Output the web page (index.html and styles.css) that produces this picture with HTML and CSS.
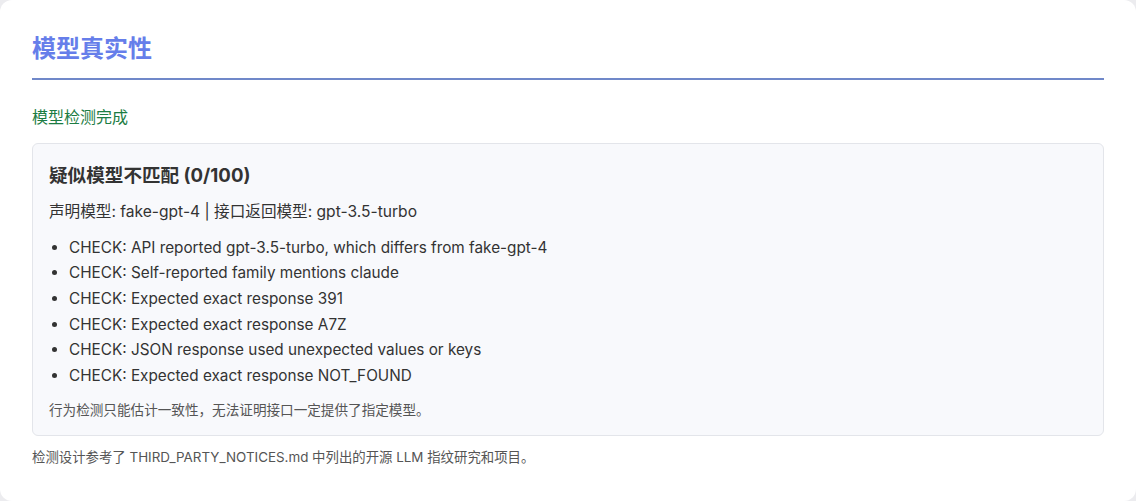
FILE: index.html
```html
<!DOCTYPE html>
<html lang="zh-CN">
<head>
  <meta charset="UTF-8">
  <title>模型真实性</title>
  <link rel="stylesheet" href="styles.css">
</head>
<body>
  <div class="panel">
    <h2 class="panel-title">模型真实性</h2>
    <p class="status ok">模型检测完成</p>
    <div class="result">
      <h3>疑似模型不匹配 (0/100)</h3>
      <p class="meta">声明模型: fake-gpt-4 | 接口返回模型: gpt-3.5-turbo</p>
      <ul class="checks">
        <li>CHECK: API reported gpt-3.5-turbo, which differs from fake-gpt-4</li>
        <li>CHECK: Self-reported family mentions claude</li>
        <li>CHECK: Expected exact response 391</li>
        <li>CHECK: Expected exact response A7Z</li>
        <li>CHECK: JSON response used unexpected values or keys</li>
        <li>CHECK: Expected exact response NOT_FOUND</li>
      </ul>
      <p class="note">行为检测只能估计一致性，无法证明接口一定提供了指定模型。</p>
    </div>
    <p class="footnote">检测设计参考了 THIRD_PARTY_NOTICES.md 中列出的开源 LLM 指纹研究和项目。</p>
  </div>
</body>
</html>
```

FILE: styles.css
```css
body {
  margin: 0;
  background: #ececef;
  font-family: Inter, "Noto Sans CJK SC", sans-serif;
  color: #333;
}
.panel {
  background: #fff;
  border-radius: 12px;
  height: 100vh;
  box-sizing: border-box;
  padding: 32px;
}
.panel-title {
  margin: 0;
  font-size: 24px;
  line-height: 1.4;
  font-weight: 700;
  color: #667eea;
  padding-bottom: 12px;
  border-bottom: 2px solid #7088c9;
}
.status {
  margin: 25px 0 13px;
  font-size: 16px;
  line-height: 25.6px;
}
.status.ok {
  color: #1c7c43;
}
.result {
  background: #f8f9fc;
  border: 1px solid #e3e5ea;
  border-radius: 6px;
  padding: 18px 16px 15px;
}
.result h3 {
  margin: 0 0 10px;
  font-size: 18.6px;
  line-height: 27px;
  font-weight: 700;
  color: #333;
}
.meta {
  margin: 0;
  font-size: 15.6px;
  line-height: 25.6px;
}
.checks {
  margin: 10px 0 12px;
  padding-left: 20px;
  font-size: 15.3px;
  line-height: 25.6px;
}
.note {
  margin: 0;
  font-size: 13.6px;
  line-height: 20px;
  color: #555;
}
.footnote {
  margin: 11px 0 0;
  font-size: 13.4px;
  line-height: 20px;
  color: #555;
}
```
